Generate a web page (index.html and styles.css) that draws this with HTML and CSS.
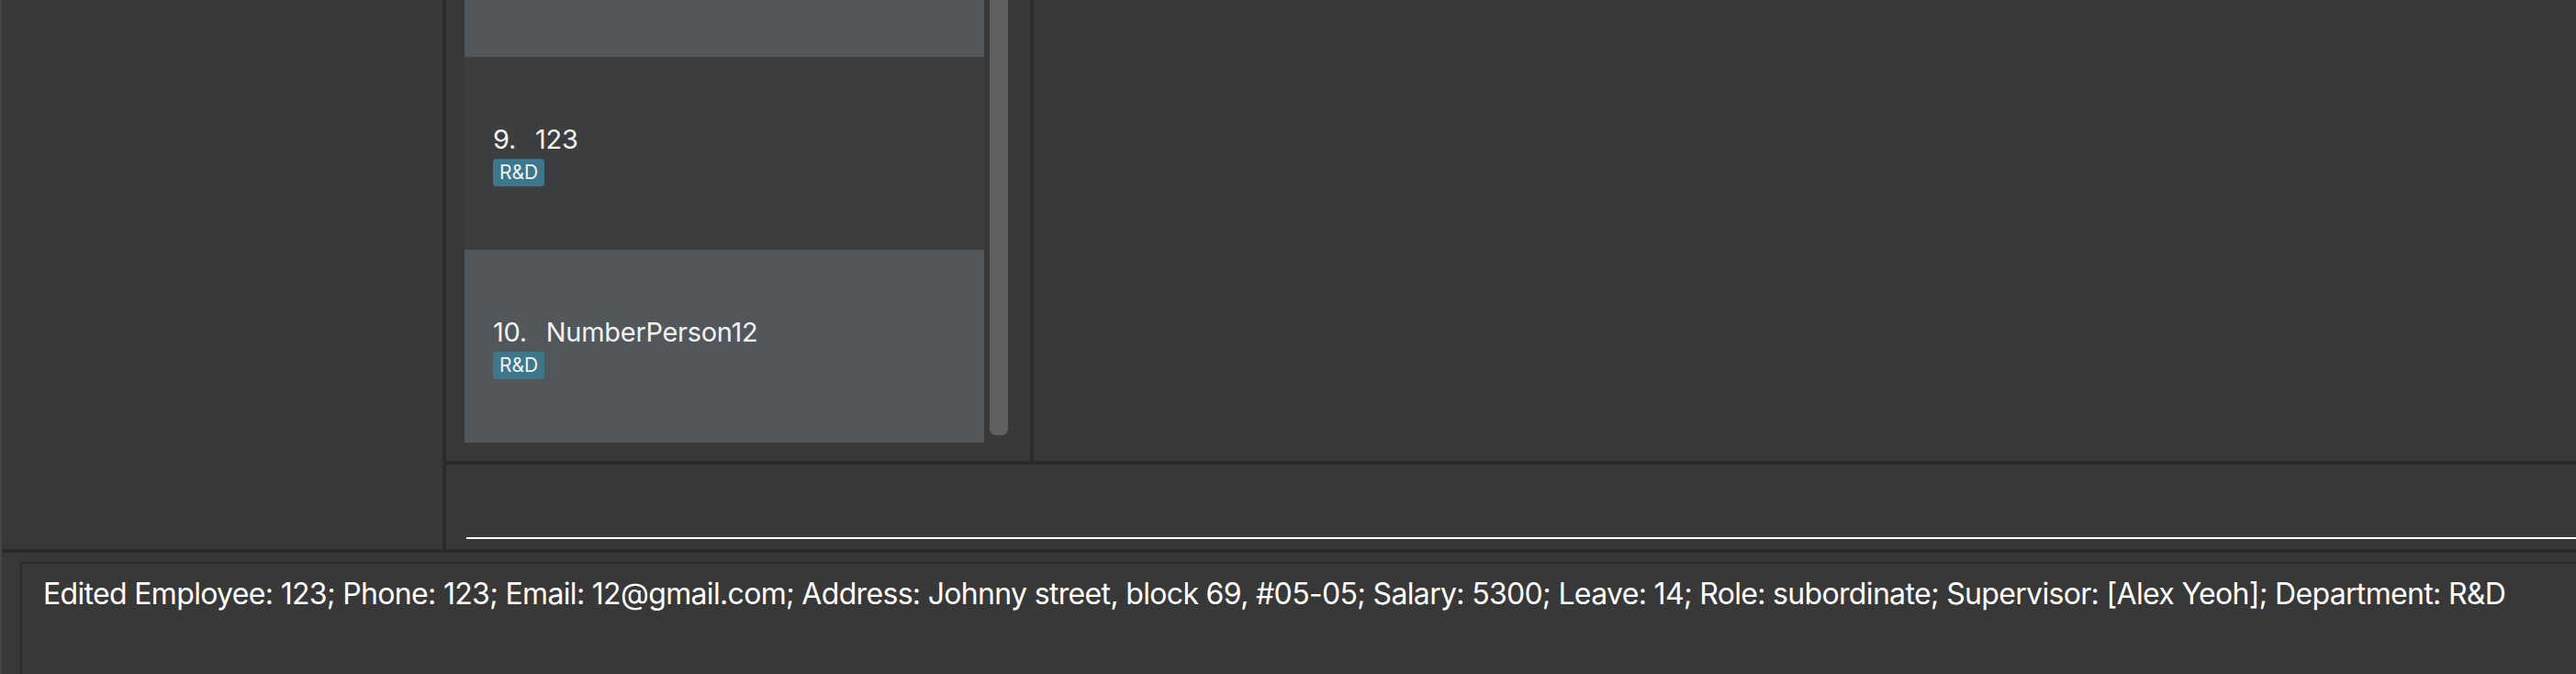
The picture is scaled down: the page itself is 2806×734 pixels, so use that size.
FILE: index.html
```html
<!DOCTYPE html>
<html lang="en">
<head>
<meta charset="utf-8">
<title>Employee Manager</title>
<link rel="stylesheet" href="styles.css">
</head>
<body>
<div class="window">
  <div class="top">
    <aside class="sidebar"></aside>
    <main class="main">
      <div class="panes">
        <section class="list-panel">
          <div class="list">
            <div class="card card-light" aria-hidden="true"></div>
            <div class="card card-dark">
              <div class="name"><span class="index">9.</span><span>123</span></div>
              <div class="tags"><span class="tag">R&amp;D</span></div>
            </div>
            <div class="card card-light">
              <div class="name"><span class="index">10.</span><span>NumberPerson12</span></div>
              <div class="tags"><span class="tag">R&amp;D</span></div>
            </div>
          </div>
          <div class="scrollbar"><div class="thumb"></div></div>
        </section>
        <section class="detail"></section>
      </div>
      <div class="command">
        <div class="command-field"></div>
      </div>
    </main>
  </div>
  <footer class="result">
    <div class="result-box">Edited Employee: 123; Phone: 123; Email: 12@gmail.com; Address: Johnny street, block 69, #05-05; Salary: 5300; Leave: 14; Role: subordinate; Supervisor: [Alex Yeoh]; Department: R&amp;D</div>
  </footer>
</div>
</body>
</html>
```

FILE: styles.css
```css
* {
  box-sizing: border-box;
}

html, body {
  margin: 0;
  padding: 0;
  background: #383838;
}

body {
  width: 2806px;
  height: 734px;
  overflow: hidden;
  font-family: Inter, "Noto Sans", "Liberation Sans", sans-serif;
}

.window {
  width: 2806px;
  height: 734px;
  display: flex;
  flex-direction: column;
  border-left: 2px solid #454545;
  background: #383838;
}

.top {
  height: 602px;
  flex: none;
  display: flex;
  border-bottom: 4px solid #2b2b2b;
}

.sidebar {
  width: 484px;
  flex: none;
  border-right: 4px solid #2b2b2b;
  background: #383838;
}

.main {
  flex: 1;
  display: flex;
  flex-direction: column;
  min-width: 0;
}

.panes {
  height: 506px;
  flex: none;
  display: flex;
  border-bottom: 4px solid #2b2b2b;
}

.list-panel {
  width: 640px;
  flex: none;
  display: flex;
  gap: 6px;
  padding: 0 24px 0 20px;
  border-right: 4px solid #2b2b2b;
  background: #383838;
}

.list {
  width: 566px;
  height: 482px;
  flex: none;
  display: flex;
  flex-direction: column;
  justify-content: flex-end;
  overflow: hidden;
}

.card {
  height: 210px;
  flex: none;
  display: flex;
  flex-direction: column;
  justify-content: center;
  gap: 4px;
  padding: 4px 31px 0;
}

.card-light {
  background: #51575a;
}

.card-dark {
  background: #3c3d3f;
}

.name {
  display: flex;
  gap: 21px;
  font-size: 29px;
  line-height: 34px;
  letter-spacing: -0.3px;
  color: #f2f2f2;
}

.tags {
  display: flex;
}

.tag {
  height: 30px;
  padding: 0 7px;
  border-radius: 4px;
  background: #3e768b;
  color: #eef3f5;
  font-size: 21px;
  line-height: 30px;
}

.scrollbar {
  width: 20px;
  flex: none;
  height: 474px;
}

.thumb {
  height: 100%;
  background: #606060;
  border-radius: 0 0 7px 7px;
}

.detail {
  flex: 1;
  background: #383838;
}

.command {
  flex: 1;
  padding: 0 0 11px 22px;
  display: flex;
  align-items: flex-end;
}

.command-field {
  flex: 1;
  height: 40px;
  border-bottom: 2px solid #ffffff;
}

.result {
  flex: 1;
  padding: 10px 0 0 20px;
  overflow: hidden;
}

.result-box {
  height: 200px;
  border-top: 2px solid #2b2b2b;
  border-left: 2px solid #2b2b2b;
  padding: 13px 0 0 23px;
  font-size: 32px;
  letter-spacing: -0.67px;
  color: #ffffff;
  white-space: nowrap;
}
```
